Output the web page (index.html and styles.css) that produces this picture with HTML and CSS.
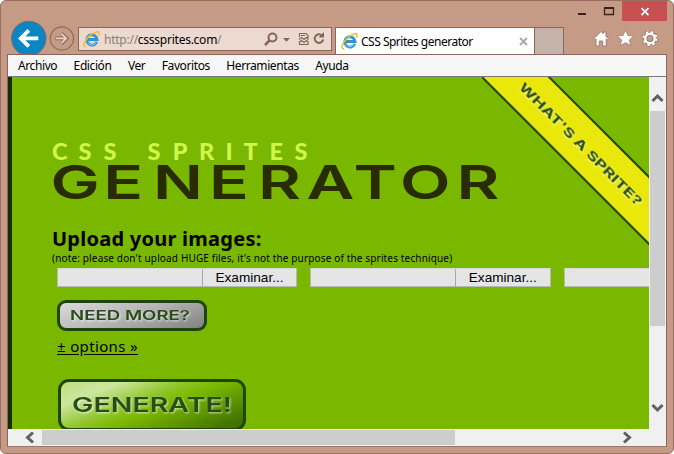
FILE: index.html
```html
<!DOCTYPE html>
<html lang="es">
<head>
<meta charset="utf-8">
<title>CSS Sprites generator</title>
<link rel="stylesheet" href="styles.css">
</head>
<body>
<svg class="defs" width="0" height="0">
  <defs>
    <symbol id="ie" viewBox="0 0 16 16">
      <path d="M13 10.200A4.900 4.900 0 1 1 13.300 8H4.200" fill="none" stroke="#2f92d2" stroke-width="2.600"/>
      <path d="M12.600 10.300A4.900 4.900 0 0 1 4 10.800" fill="none" stroke="#7accf0" stroke-width=".9"/>
      <path d="M2.900 14.800C-.6 15.300.5 10.500 4.800 6 9.200 1.500 14.300-.5 15 1.400c.3.800 0 1.800-.6 3" fill="none" stroke="#efc02d" stroke-width="1.400"/>
    </symbol>
  </defs>
</svg>
<div class="window">
  <div class="titlebar">
    <svg width="90" height="21" viewBox="0 0 90 21">
      <path d="M1 14h8" stroke="#35221a" stroke-width="2"/>
      <path d="M27.500 8h9v6.500h-9z" fill="none" stroke="#35221a" stroke-width="1.300"/><path d="M27 8h10" stroke="#35221a" stroke-width="2"/>
      <path d="M45 1h45v20H45z" fill="#c75050"/>
      <path d="M64.500 8.200l7 7m0-7l-7 7" stroke="#fff" stroke-width="1.700"/>
    </svg>
  </div>
  <div class="nav">
    <svg class="history" width="71" height="36" viewBox="0 0 71 36">
      <circle cx="21" cy="19.500" r="18.300" fill="#0c86c2" stroke="#8a665c"/>
      <path d="M31 19.500H13m8-8.500l-8.500 8.500 8.500 8.500" fill="none" stroke="#fff" stroke-width="4"/>
      <circle cx="56" cy="19.500" r="12.300" fill="none" stroke="#90695c" stroke-width="1.300"/>
      <path d="M49 19.500h12m-5.500-5.500l5.500 5.500-5.500 5.500" fill="none" stroke="#90695c" stroke-width="4"/>
      <path d="M49.500 19.500h11m-5-5l5 5-5 5" fill="none" stroke="#e8d0c5" stroke-width="2"/>
    </svg>
    <div class="address">
      <svg width="17" height="17"><use href="#ie"/></svg>
      <span class="url">http://<b>csssprites.com</b>/</span>
      <svg class="tools" width="69" height="20" viewBox="0 0 69 20" fill="none" stroke="#80665a">
        <circle cx="14.500" cy="8.500" r="4" stroke-width="2"/><path d="M11.500 11.500L7 16" stroke-width="2.500"/>
        <path d="M25 9h7l-3.500 3.700z" fill="#80665a" stroke="none"/>
        <path d="M41.500 8V4.500H48l2 2V9M41.500 12v3.500H50V13M41 10.500l2.500-2 2.500 2 2.500-2 2 2M41 13.500l2.500-2 2.500 2 2.500-2 2 2M43 6.500h4" stroke-width="1.200"/>
        <path d="M64 6.500a4.300 4.300 0 1 0 1.200 4" stroke-width="2"/><path d="M66 3v5.500h-5.500z" fill="#80665a" stroke="none"/>
      </svg>
    </div>
    <div class="tab">
      <svg width="17" height="17"><use href="#ie"/></svg>
      <span>CSS Sprites generator</span>
      <svg class="close" width="9" height="9" viewBox="0 0 9 9"><path d="M1 1l7 7m0-7L1 8" stroke="#aaa" stroke-width="2"/></svg>
    </div>
    <div class="newtab"></div>
    <svg class="commands" width="66" height="20" viewBox="0 0 66 20">
      <path d="M1 9.500L8 2.500l2.300 2.300V3H13v4.500l2.500 2-1.200 1.300-1.100-.9V17H9.700v-5H6.300v5H3V9.900l-.9.900z" fill="#fff" stroke="#90695c" stroke-width=".8"/>
      <path d="M32.500 1l2.300 5.500 5.900.5-4.500 3.900 1.500 5.900-5.200-3.200-5.200 3.200 1.500-5.900-4.500-3.900 5.900-.5z" fill="#fff" stroke="#90695c" stroke-width=".6"/>
      <g fill="none" stroke="#90695c"><circle cx="57" cy="9.500" r="4.700" stroke-width="4"/><circle cx="57" cy="9.500" r="6.700" stroke-width="3" stroke-dasharray="2.900 2.362"/></g>
      <g fill="none" stroke="#fff"><circle cx="57" cy="9.500" r="4.700" stroke-width="2.400"/><circle cx="57" cy="9.500" r="6.500" stroke-width="2" stroke-dasharray="2.400 2.705"/></g>
    </svg>
  </div>
  <div class="client">
    <div class="menubar"><span>Archivo</span><span>Edición</span><span>Ver</span><span>Favoritos</span><span>Herramientas</span><span>Ayuda</span></div>
    <div class="viewport">
      <main class="page">
        <svg class="logo" width="460" height="64" viewBox="0 0 460 64">
          <text class="logo-small" y="20" x="0 26.500 51.500 77 95.500 120.800 147 173.500 191.500 217.500 242.500">CSS SPRITES</text>
          <text class="logo-big" transform="translate(0 58.500) scale(1.400 1)" x="-1 36.700 72.200 112.200 147.200 181.800 215.300 248.500 289">GENERATOR</text>
        </svg>
        <h1>Upload your images:</h1>
        <p class="note">(note: please don't upload HUGE files, it's not the purpose of the sprites technique)</p>
        <div class="files">
          <div class="file"><span class="field"></span><span class="browse">Examinar...</span></div>
          <div class="file"><span class="field"></span><span class="browse">Examinar...</span></div>
          <div class="file"><span class="field"></span></div>
        </div>
        <div class="more">
          <svg width="144" height="25" viewBox="0 0 144 25"><text class="relief" x="10" y="17" textLength="120" lengthAdjust="spacingAndGlyphs">NEED MORE?</text></svg>
        </div>
        <a class="options">± options »</a>
        <div class="generate">
          <svg width="182" height="46" viewBox="0 0 182 46"><text class="relief big" x="11" y="29.500" textLength="160" lengthAdjust="spacingAndGlyphs">GENERATE!</text></svg>
        </div>
        <svg class="ribbon" width="167" height="168" viewBox="0 0 167 168">
          <path d="M-1-1h68l101 101v68z" fill="#eae80b"/>
          <path d="M-1-1l169 169M65-2l104 104" stroke="#204508" stroke-width="2"/>
          <text class="relief ribbon-text" transform="translate(39 8) rotate(45)" x="0" y="4.500" textLength="168" lengthAdjust="spacingAndGlyphs">WHAT'S A SPRITE?</text>
        </svg>
      </main>
      <div class="vscroll">
        <svg width="17" height="34" viewBox="0 0 17 34"><path d="M3.500 24l5-5 5 5" fill="none" stroke="#606060" stroke-width="3"/></svg>
        <div class="thumb"></div>
        <svg class="end" width="17" height="34" viewBox="0 0 17 34"><path d="M3.500 10l5 5 5-5" fill="none" stroke="#606060" stroke-width="3"/></svg>
      </div>
    </div>
    <div class="hscroll">
      <svg width="34" height="17" viewBox="0 0 34 17"><path d="M25 3.500l-5.500 5 5.500 5" fill="none" stroke="#606060" stroke-width="3"/></svg>
      <div class="thumb"></div>
      <svg class="end" width="34" height="17" viewBox="0 0 34 17"><path d="M9 3.500l5.500 5-5.500 5" fill="none" stroke="#606060" stroke-width="3"/></svg>
    </div>
  </div>
</div>
</body>
</html>
```
FILE: styles.css
```css
* { box-sizing: border-box; }
body { margin: 0; background: #fff; overflow: hidden; font-family: "Noto Sans", sans-serif; }
svg { display: block; flex: none; }
.defs { position: absolute; }
.window { width: 674px; height: 454px; background: #c69b85; border: 1px solid #996f63; border-radius: 6px; padding: 0 6px 6px; display: flex; flex-direction: column; }
.titlebar { height: 20px; display: flex; justify-content: flex-end; align-items: flex-start; flex: none; }
.titlebar svg { margin-top: -1px; }
.nav { height: 33px; display: flex; align-items: flex-start; flex: none; }
.history { margin-top: -1px; overflow: hidden; height: 34px; }
.address { width: 254px; height: 24px; margin-top: 6px; border: 1px solid #8c665a; background: #ecdad1; display: flex; align-items: center; padding-left: 4px; }
.url { font-size: 12px; color: #8b7c75; margin-left: 4px; width: 154px; white-space: nowrap; letter-spacing: -.25px; padding-top: 1px; }
.url b { font-weight: 400; color: #000; }
.tab { width: 200px; height: 27px; margin: 6px 0 0 3px; background: #fff; border: 1px solid #8c665a; border-bottom: 0; display: flex; align-items: center; padding: 0 6px 0 5px; font-size: 12px; white-space: nowrap; }
.tab span { margin-left: 3px; letter-spacing: -.5px; }
.close { margin-left: auto; }
.newtab { width: 29px; height: 27px; margin-top: 6px; background: #c5b2a9; border: 1px solid #8c665a; border-left: 0; border-bottom: 0; }
.commands { margin: 8px 0 0 29px; }
.client { height: 393px; border: 1px solid #8c665a; border-bottom-color: #9a7568; display: flex; flex-direction: column; flex: none; }
.menubar { height: 22px; flex: none; background: #f6f6f6; border-bottom: 1px solid #777; display: flex; gap: 16.400px; align-items: center; padding: 0 10px; font-size: 12px; letter-spacing: -.4px; }
.viewport { height: 352px; display: flex; flex: none; }
.page { width: 641px; background: #7ab800; border-left: 4px solid #132c00; overflow: hidden; position: relative; padding: 63px 0 0 40px; }
.logo { overflow: visible; }
.logo-small { font: 900 23.500px Lato, sans-serif; fill: #cff74a; }
.logo-big { font: 600 47px Inter, sans-serif; fill: #292b00; }
h1 { margin: 21px 0 0; height: 27px; line-height: 27px; font-size: 20px; font-weight: 700; letter-spacing: .25px; }
.note { margin: 0; height: 14px; line-height: 12px; font-size: 10px; letter-spacing: .15px; white-space: nowrap; }
.files { display: flex; gap: 13px; margin: 2px 0 0 5px; }
.file { display: flex; flex: none; width: 240.300px; height: 19px; background: #e5e5e5; border: 1px solid #b8bab2; border-top-color: #d7dbcf; }
.field { width: 145px; border-right: 1px solid #a8a8a8; }
.browse { width: 93px; font: 13.600px/17px "Liberation Sans", sans-serif; text-align: center; }
.more { width: 150px; height: 31px; margin: 13px 0 0 5px; border: 3px solid #1e460a; border-radius: 9px; background: linear-gradient(160deg, #dadada, #b6b6b6 48%, #818181); }
.relief { font: 600 13px Inter, sans-serif; fill: #294d16; filter: drop-shadow(1px 1px 1px #ffffffb0); }
.relief.big { font-size: 20px; }
.relief.ribbon-text { font-size: 11.500px; font-weight: 700; filter: drop-shadow(1px 1px 1px #ffffffa0); }
.options { display: block; width: max-content; margin: 4px 0 0 5px; font-size: 15px; letter-spacing: .35px; line-height: 22px; text-decoration: underline; text-underline-offset: 2px; }
.generate { width: 188px; height: 52px; margin: 22px 0 0 6px; border: 3px solid #1e460a; border-radius: 11px; background: linear-gradient(158deg, #bede80 0%, #cde79d 20%, #90c52c 42%, #7ab800 55%, #437400 92%); }
.ribbon { position: absolute; top: 0; right: 0; }
.vscroll { width: 17px; background: #f0f0f0; display: flex; flex-direction: column; }
.vscroll .thumb { height: 215px; margin: 0 1px; background: #cdcdcd; }
.hscroll { height: 17px; background: #f0f0f0; display: flex; align-items: center; }
.hscroll .thumb { width: 413px; height: 15px; background: #cdcdcd; }
.vscroll .end { margin-top: auto; }
.hscroll .end { margin-left: auto; margin-right: 17px; }
```
